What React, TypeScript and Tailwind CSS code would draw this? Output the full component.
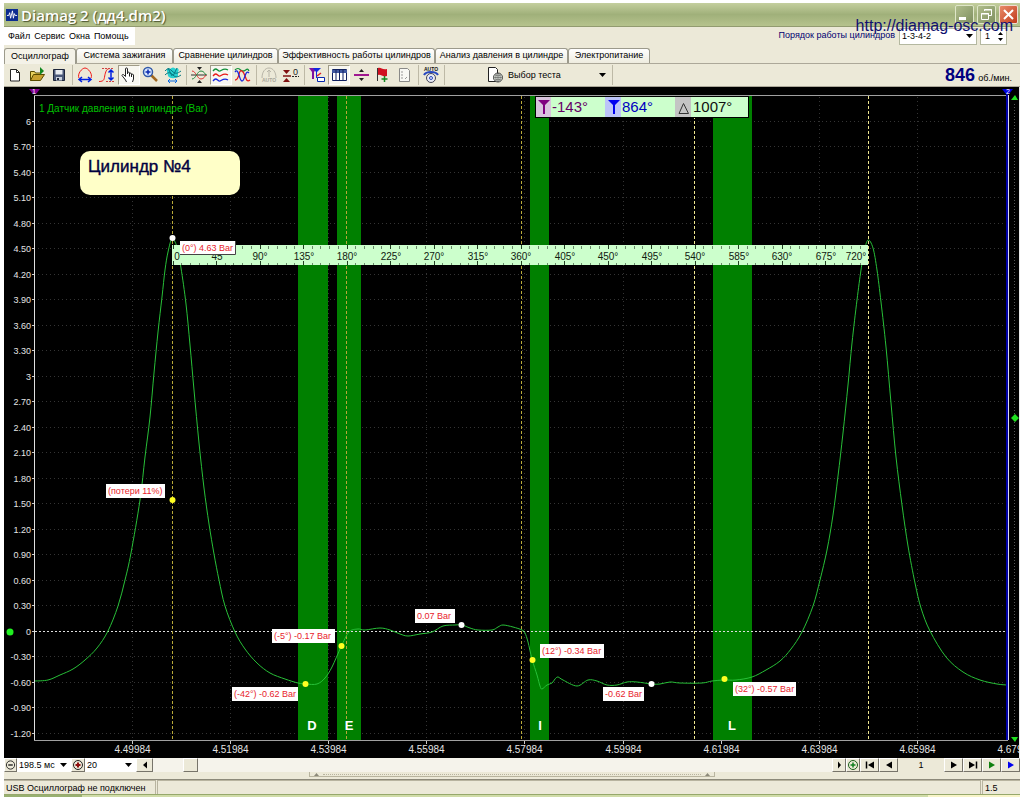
import { useState } from "react";
import type { ReactNode } from "react";

const TABS = [
  { label: "Осциллограф", w: "w-[72px]" },
  { label: "Система зажигания", w: "w-[97px]" },
  { label: "Сравнение цилиндров", w: "w-[105px]" },
  { label: "Эффективность работы цилиндров", w: "w-[157px]" },
  { label: "Анализ давления в цилиндре", w: "w-[133px]" },
  { label: "Электропитание", w: "w-[82px]" },
];

// pressure trace, chart units
const TRACE: [number, number][] = [
  [35, 681], [48, 680], [60, 675], [73, 669], [85, 660], [97, 648], [108, 631], [118, 606], [125, 580],
  [131, 553], [140, 500], [145, 457], [150, 417], [154, 373], [158, 332], [162, 297], [165, 270], [168, 252],
  [172, 239], [177, 247], [181, 268], [186, 304], [190, 345], [194, 390], [199, 443], [204, 488], [209, 524],
  [214, 554], [219, 580], [225, 606], [235, 632], [245, 649], [257, 663], [270, 673], [285, 679], [298, 683],
  [306, 684], [317, 684], [325, 678], [332, 667], [341, 647], [349, 632], [358, 629], [365, 630], [380, 628],
  [390, 630], [400, 634], [408, 636], [420, 634], [432, 632], [443, 626], [455, 625], [462, 625], [470, 628],
  [478, 630], [492, 630], [498, 627], [503, 625], [513, 627], [522, 630], [525, 633], [528, 642], [532, 659],
  [537, 675], [540, 686], [542, 689], [547, 685], [552, 683], [555, 679], [558, 677], [563, 680], [577, 686],
  [588, 680], [597, 681], [607, 685], [617, 685], [627, 682], [637, 682], [652, 684], [660, 684], [670, 682],
  [680, 683], [702, 683], [712, 681], [724, 680], [736, 680], [752, 677], [766, 670], [780, 661], [791, 649],
  [802, 632], [813, 606], [820, 580], [827, 550], [833, 515], [838, 476], [843, 433], [848, 385], [852, 343],
  [857, 300], [861, 270], [864, 252], [868, 240], [873, 248], [877, 270], [881, 302], [886, 347], [891, 403],
  [896, 457], [902, 505], [908, 546], [915, 583], [921, 608], [930, 631], [946, 657], [963, 672], [980, 680],
  [997, 684], [1007, 685],
];

const LABELS = [
  { x: 180, y: 241, w: 56, text: "(0°) 4.63 Bar" },
  { x: 106, y: 484, w: 59, text: "(потери 11%)" },
  { x: 272, y: 629, w: 63, text: "(-5°) -0.17 Bar" },
  { x: 232, y: 687, w: 66, text: "(-42°) -0.62 Bar" },
  { x: 415, y: 609, w: 40, text: "0.07 Bar" },
  { x: 540, y: 644, w: 64, text: "(12°) -0.34 Bar" },
  { x: 603, y: 687, w: 41, text: "-0.62 Bar" },
  { x: 733, y: 682, w: 63, text: "(32°) -0.57 Bar" },
];

const BANDS = [
  { x: 298, w: 30, t: "D", tx: 312 },
  { x: 337, w: 24, t: "E", tx: 349 },
  { x: 530, w: 19, t: "I", tx: 540 },
  { x: 713, w: 39, t: "L", tx: 732 },
];

const DOTS = [
  [172, 238, "#fff"], [461, 625, "#fff"], [651, 684, "#fff"],
  [172, 500, "#ff2"], [305, 684, "#ff2"], [341, 646, "#ff2"], [532, 660, "#ff2"], [724, 679, "#ff2"],
] as const;

const yLabel = (i: number) => {
  const v = 6 - i * 0.3;
  if (Math.abs(v) < 0.01) return "0";
  return i === 0 || i === 10 ? String(Math.round(v)) : v.toFixed(2);
};

// Catmull-Rom through the samples
function smooth(p: [number, number][]) {
  let d = `M${p[0][0]} ${p[0][1]}`;
  for (let i = 0; i < p.length - 1; i++) {
    const a = p[i - 1] ?? p[i], b = p[i], c = p[i + 1], e = p[i + 2] ?? c;
    d += `C${b[0] + (c[0] - a[0]) / 6} ${b[1] + (c[1] - a[1]) / 6} ${c[0] - (e[0] - b[0]) / 6} ${c[1] - (e[1] - b[1]) / 6} ${c[0]} ${c[1]}`;
  }
  return d;
}

function Chart() {
  return (
    <svg viewBox="4 87 1016 671" className="block w-full bg-black" fontFamily="Liberation Sans, Arial, sans-serif" role="img" aria-label="Датчик давления в цилиндре">
      {/* grid */}
      {Array.from({ length: 25 }, (_, i) => {
        const y = Math.round(122 + i * 25.48) - 0.5;
        return (
          <g key={i}>
            {i !== 20 && <path d={`M38 ${y}H1006`} stroke="#343434" strokeDasharray="1 3" />}
            <path d={`M32 ${y}h3`} stroke="#ccc" />
            <text x="31" y={y + 3.5} fontSize="9" fill="#e4e4e4" textAnchor="end">{yLabel(i)}</text>
          </g>
        );
      })}
      {Array.from({ length: 10 }, (_, i) => {
        const x = Math.round(132 + i * 98.1) + 0.5;
        return (
          <g key={i}>
            {i < 9 && <path d={`M${x} 97V740`} stroke="#343434" strokeDasharray="1 3" />}
            {i < 9 && <path d={`M${x} 741v3`} stroke="#ccc" />}
            <text x={x} y="753" fontSize="10" fill="#e4e4e4" textAnchor="middle">{(4.49984 + i * 0.02).toFixed(5)}</text>
          </g>
        );
      })}

      {BANDS.map((b) => <rect key={b.t} x={b.x} y="95" width={b.w} height="646" fill="#008000" />)}
      <path d="M35 631.5H1007" stroke="#ddd" strokeDasharray="2 2" />
      {[172.5, 346.5, 521.5, 694.5, 868.5].map((x) => (
        <path key={x} d={`M${x} 96V740`} stroke={x < 600 ? "#b8a838" : "#f0e890"} strokeDasharray="3 2" />
      ))}
      <path d={smooth(TRACE)} fill="none" stroke="#28c038" strokeWidth="1" />

      {/* axes and cursors */}
      <path d="M34.5 95V741" stroke="#e0e0e0" strokeWidth="1" />
      <path d="M34 95.5H1008M34 740.5H1008" stroke="#a0a0a0" />
      <path d="M1007 92V740" stroke="#0000a8" strokeWidth="2" />
      <path d="M1008.5 95V740" stroke="#d8d8f0" />
      <path d="M1014.5 104V734" stroke="#555" strokeDasharray="1 2" />
      <path d="M29 89h11l-4 5h-3z" fill="#800090" />
      <path d="M1002 89h11l-4 5h-3z" fill="#0000e0" />
      <text x="34" y="94" fontSize="7" fill="#fff" textAnchor="middle">1</text>
      <text x="1008" y="94" fontSize="7" fill="#fff" textAnchor="middle">2</text>
      <path d="M1011 100h7l-3-5zM1011 737h7l-3 5zM1011 418l4-4 4 4-4 4z" fill="#20e020" />
      <circle cx="10" cy="632" r="3.5" fill="#20f020" />
      <path d="M1019.5 87V758" stroke="#e8e8e8" />

      <text x="39" y="112" fontSize="10" fill="#00c000">1 Датчик давления в цилиндре (Bar)</text>
      {BANDS.map((b) => (
        <text key={b.t} x={b.tx} y="730" fontSize="13" fontWeight="bold" fill="#fff" textAnchor="middle">{b.t}</text>
      ))}

      {/* callout */}
      <rect x="80" y="151" width="160" height="44" rx="10" fill="#ffffc8" />
      <text x="88" y="172" fontSize="17" fill="#000040" stroke="#000040" strokeWidth="0.4">Цилиндр №4</text>

      {/* crank angle ruler */}
      <rect x="172" y="245" width="696" height="20" fill="#ccffcc" />
      {Array.from({ length: 80 }, (_, i) => {
        const x = Math.round(172.5 + i * 8.7) + 0.5;
        const major = i % 5 === 0;
        return <path key={i} d={major ? `M${x} 245v4M${x} 265v-4` : `M${x} 246v3M${x} 265v-2`} stroke={major ? "#234023" : "#6a8a6a"} />;
      })}
      {Array.from({ length: 17 }, (_, i) => (
        <text key={i} x={i === 0 ? 177 : i === 16 ? 856 : Math.round(173 + i * 43.5)} y="260" fontSize="10" fill="#102010" textAnchor="middle">
          {i < 2 ? i * 45 : `${i * 45}°`}
        </text>
      ))}

      {LABELS.map((l) => (
        <g key={l.text}>
          <rect x={l.x} y={l.y} width={l.w} height="14" fill="#fff" />
          <text x={l.x + 2} y={l.y + 10} fontSize="9" fill="#e81c2c">{l.text}</text>
        </g>
      ))}
      <path d="M180 254.5h55.5V241" fill="none" stroke="#444" />
      {DOTS.map(([x, y, c]) => <circle key={`${x}-${y}`} cx={x + 0.5} cy={y} r="3" fill={c} />)}

      {/* cursor readout */}
      <rect x="535.5" y="96.5" width="213" height="21" fill="#ccffcc" stroke="#000" />
      <path d="M536 97h15v20h-15z" fill="#d9c4dd" />
      <path d="M605 97h16v20h-16z" fill="#bcc4f8" />
      <path d="M675 97h16v20h-16z" fill="#c4c4c4" />
      <path d="M538 100h12l-5 5v9h-2v-9z" fill="#800080" />
      <path d="M608 100h12l-5 5v9h-2v-9z" fill="#0000f0" />
      <path d="M679 113.500h9.500l-5-10z" fill="none" stroke="#333" />
      <g fontSize="15">
        <text x="552" y="112" fill="#660066">-143°</text>
        <text x="622" y="112" fill="#0000c0">864°</text>
        <text x="693" y="112" fill="#101010">1007°</text>
      </g>
    </svg>
  );
}

const Ic = ({ children }: { children: ReactNode }) => (
  <svg width="18" height="18" viewBox="0 0 18 18" fill="none" aria-hidden="true">{children}</svg>
);

function Tool({ label, on, children }: { label: string; on?: boolean; children: ReactNode }) {
  return (
    <button
      aria-label={label}
      className={on
        ? "flex h-5 w-[22px] flex-none items-center justify-center border border-r-white border-b-white border-l-[#a09c88] border-t-[#a09c88] bg-[#f8f7f1]"
        : "flex h-5 w-[22px] flex-none items-center justify-center"}
    >
      <Ic>{children}</Ic>
    </button>
  );
}

const Sep = () => <span className="flex h-5 w-1 flex-none justify-center"><span className="w-px bg-[#bdb9a6]" /></span>;

const Arrow = () => (
  <svg width="7" height="4" viewBox="0 0 7 4" className="pointer-events-none absolute right-1 top-1/2 -mt-0.5" aria-hidden="true">
    <path d="M0 0h7L3.500 4z" fill="#000" />
  </svg>
);

function Btn({ label, w, children }: { label: string; w: string; children: ReactNode }) {
  return (
    <button aria-label={label} className={`${w} flex h-full flex-none items-center justify-center border border-t-white border-l-white border-r-[#77746a] border-b-[#77746a] bg-[#ece9d8]`}>
      <svg width="12" height="12" viewBox="0 0 12 12" fill="none" aria-hidden="true">{children}</svg>
    </button>
  );
}

function Toolbar() {
  return (
    <div className="flex h-[23px] items-center border-b border-[#aca899]">
      <Tool label="Новый"><path d="M4.500 3.500h6l3 3v8.500h-9z" fill="#fff" stroke="#222" /><path d="M10.500 3.500v3h3" stroke="#222" /></Tool>
      <Tool label="Открыть">
        <path d="M2.500 14.500v-9h4l1 1.500h5v2" fill="#e8d060" stroke="#594a00" />
        <path d="M2.500 14.500l3-6h11l-4 6z" fill="#c8a030" stroke="#594a00" />
        <path d="M12 1v8l4-4z" fill="#108820" />
      </Tool>
      <Tool label="Сохранить">
        <path d="M3.500 3.500h11v11h-11z" fill="#4a5878" stroke="#1c2438" />
        <path d="M5.500 4h7v4.500h-7z" fill="#e8ecf0" /><path d="M6 11h6v3.500h-6z" fill="#c8d0dc" /><path d="M7 12h2v2H7z" fill="#1c2438" />
      </Tool>
      <Sep />
      <Tool label="Период">
        <path d="M3 12C1 8 6 2 9 2s8 6 6 10" stroke="#f01818" /><path d="M3 13.500h12M6 11l-3 2.500 3 2.500M12 11l3 2.500-3 2.500" stroke="#0020e0" strokeWidth="1.500" />
      </Tool>
      <Tool label="Амплитуда">
        <path d="M1 15.500c6 0 5-3 6-7s2-6 5-6" stroke="#f01818" /><path d="M4 2.500h12M8 15.500h8" stroke="#d04040" strokeDasharray="2 1" />
        <path d="M13 4v10M10.500 6.500L13 4l2.500 2.500M10.500 11.500L13 14l2.500-2.500" stroke="#0020e0" strokeWidth="1.500" />
      </Tool>
      <Tool label="Рука" on>
        <path d="M6.500 16l-1-2-3.500-4.500c0-1 1-1.500 2-.5l1.500 1.500V3c0-1.500 2-1.500 2 0v5-1c0-1.200 2-1.200 2 0v1c0-1.200 2-1.200 2 0v1c0-1.200 2-1 2 0v4l-1 3" fill="#fff" stroke="#222" />
        <path d="M9.500 8v2.500M11.500 9v2" stroke="#222" />
      </Tool>
      <Tool label="Увеличить">
        <path d="M9 9l6 6" stroke="#a06820" strokeWidth="2.500" /><circle cx="6" cy="6" r="4.500" fill="#d8e8ff" stroke="#3058a8" strokeWidth="1.500" />
        <path d="M6 3.500v5M3.500 6h5" stroke="#0828b0" strokeWidth="1.500" />
      </Tool>
      <Tool label="Растянуть сигнал">
        <path d="M3 5C2 3 5 1 6 3c2-2 4-2 6 0 1-2 4 0 2 3v4c-2 3-8 3-10 0z" fill="#28d0d0" />
        <path d="M1 5c3-3 4-3 7 0s5 3 9 0M1 9c3-3 5-3 8 0s5 2 8 0M4 2l4 8M13 2l-4 8" stroke="#087880" />
        <path d="M4 15h9M6 13l-2 2 2 2M11 13l2 2-2 2" stroke="#0868e0" />
      </Tool>
      <Sep />
      <Tool label="Совместить">
        <path d="M1 9h16" stroke="#333" /><path d="M2 5c4 0 5 8 9 8 3 0 4-3 5-4" stroke="#e03030" /><path d="M2 13c4 0 5-8 9-8 3 0 4 3 5 4" stroke="#208840" />
        <path d="M7 1h5L9.500 4zM7 17h5L9.500 14z" fill="#222" />
      </Tool>
      <Tool label="Разнести" on>
        <path d="M1 5c3-4 4-1 6 0s4-4 9-1" stroke="#109038" strokeWidth="1.300" /><path d="M1 10c3-4 4-1 6 0s4-4 9-1" stroke="#e81818" strokeWidth="1.300" />
        <path d="M1 15c3-4 4-1 6 0s4-4 9-1" stroke="#1828e0" strokeWidth="1.300" />
      </Tool>
      <Tool label="Наложить">
        <path d="M1 4c4-4 5 1 8 1s4-4 6 0" stroke="#109038" strokeWidth="1.300" /><path d="M1 14c5 0 3-11 7-9s3 13 8 9" stroke="#e81818" strokeWidth="1.300" />
        <path d="M1 6c4-5 4 9 7 9s3-12 7-8" stroke="#1828e0" strokeWidth="1.300" />
      </Tool>
      <Sep />
      <Tool label="Авто">
        <path d="M2 12c0-6 3-10 7-10s7 4 7 10M9 4v7M7 6l2-2 2 2" stroke="#b8b5a8" />
        <text x="9" y="16" fontSize="5" textAnchor="middle" fill="#a8a598" fontFamily="Liberation Sans, sans-serif" fontWeight="bold">AUTO</text>
      </Tool>
      <Tool label="Ноль">
        <path d="M1 4h7L4.500 8zM1 16h7l-3.500-4z" fill="#801010" /><path d="M1 10h8" stroke="#801010" strokeWidth="1.500" /><path d="M10 10.500h7" stroke="#222" strokeDasharray="2 1" />
        <text x="11" y="9" fontSize="9" fill="#222" fontFamily="Liberation Sans, sans-serif">0</text>
      </Tool>
      <Sep />
      <Tool label="Курсоры">
        <path d="M1 2h8L6 6v7H4V6z" fill="#8010a0" /><path d="M5 2h8l-4 4v6H8V6z" fill="#1028e0" /><path d="M9.500 11.500h7v4h-7z" fill="#fff" stroke="#0828b0" /><path d="M13 7l-4 3" stroke="#e02020" strokeWidth="1.500" />
      </Tool>
      <Tool label="Таблица" on>
        <path d="M2.500 3.500h14v11h-14z" fill="#fff" stroke="#102060" /><path d="M2 4h15v3H2z" fill="#4058a0" />
        <path d="M6 4v11M9.500 4v11M13 4v11" stroke="#102060" />
      </Tool>
      <Tool label="Разделить"><path d="M2 9h15" stroke="#a01890" strokeWidth="2" /><path d="M7 6h5L9.500 3zM7 12h5L9.500 15z" fill="#222" /></Tool>
      <Tool label="Добавить метку">
        <path d="M3.500 2v13" stroke="#333" /><path d="M4 2c3-1 4 2 9 1v7c-5 1-6-2-9-1z" fill="#d01020" /><path d="M10.500 10v6M7.500 13h6" stroke="#108820" strokeWidth="1.500" />
      </Tool>
      <Tool label="Отчёт">
        <path d="M3.500 2.500h8l2 2v11h-10z" fill="#f8f8f4" stroke="#8a8a88" /><path d="M5 6h2M5 9h2M5 12h2M9 13l2-2" stroke="#999" />
      </Tool>
      <Sep />
      <Tool label="Автонастройка">
        <text x="9" y="5" fontSize="5" textAnchor="middle" fill="#111" fontFamily="Liberation Sans, sans-serif" fontWeight="bold">AUTO</text>
        <path d="M2 9c2-4 12-4 14 0" stroke="#2848c0" strokeWidth="2" /><circle cx="9" cy="12" r="4.500" fill="#e8eaf4" stroke="#445" />
        <circle cx="9" cy="12" r="1.500" stroke="#2848c0" />
      </Tool>
      <Sep />
      <div className="relative ml-10 flex h-5 items-center">
        <Ic>
          <path d="M2.500 1.500h7l2 2v12h-9z" fill="#fff" stroke="#222" />
          <circle cx="12" cy="11.500" r="4.500" fill="#dde4dc" stroke="#444" /><path d="M7.500 11.500h9M12 7v9M9 9c2 1 4 1 6 0M9 14c2-1 4-1 6 0M12 7c-3 3-3 6 0 9M12 7c3 3 3 6 0 9" stroke="#555" strokeWidth="0.600" />
        </Ic>
        <select aria-label="Выбор теста" className="h-4 w-[106px] appearance-none bg-transparent pl-1 text-[9px] leading-4">
          <option>Выбор теста</option>
        </select>
        <Arrow />
      </div>
      <Sep />
      <div className="ml-auto flex items-baseline gap-[3px] pr-2">
        <span className="text-[18px] font-bold leading-5 text-[#000080]">846</span>
        <span className="text-[9px]">об./мин.</span>
      </div>
    </div>
  );
}

export default function App() {
  const [tab, setTab] = useState(0);
  const [scroll, setScroll] = useState(45);

  return (
    <div className="min-h-screen bg-white px-1 pt-[3px] font-['Liberation_Sans',Arial,sans-serif] text-[9px] text-black">
      <div className="relative bg-[#ece9d8]">
        {/* title bar */}
        <header className="flex h-6 items-center border-b border-[#929b70] bg-linear-to-b from-[#c4cf9e] via-[#a0b07a] to-[#b6c38d] px-[2px]">
          <svg width="12" height="12" viewBox="0 0 13 13" aria-hidden="true">
            <path d="M0 0h13v13H0z" fill="#0c2c90" />
            <path d="M1 7h2l1-3 1 6 2-8 1 8 1-5 1 2h2" fill="none" stroke="#fff" />
          </svg>
          <h1 className="ml-[3px] font-['Open_Sans',sans-serif] text-[15px] font-semibold leading-5 text-white [text-shadow:1px_1px_1px_#4c5630]">Diamag 2 (дд4.dm2)</h1>
          <div className="ml-auto flex gap-[3px]">
            <button aria-label="Свернуть" className="flex size-[19px] items-end rounded-[2px] border border-[#dfe6c8] bg-linear-to-br from-[#b0bd8c] to-[#7f9060] p-[3px]">
              <span className="h-[3px] w-[7px] bg-white" />
            </button>
            <button aria-label="Восстановить" className="flex size-[19px] items-center justify-center rounded-[2px] border border-[#dfe6c8] bg-linear-to-br from-[#b0bd8c] to-[#7f9060]">
              <svg width="13" height="13" viewBox="0 0 13 13" fill="none" stroke="#fff" aria-hidden="true">
                <path d="M4.500 3V1.500h7v6H9M4 2h8M1.500 5.500h7v6h-7zM1 6h8" />
              </svg>
            </button>
            <button aria-label="Закрыть" className="flex size-[19px] items-center justify-center rounded-[2px] border border-[#f0dcd0] bg-linear-to-br from-[#e88a68] to-[#c03818]">
              <svg width="11" height="11" viewBox="0 0 11 11" stroke="#fff" strokeWidth="2" aria-hidden="true"><path d="M1 1l9 9M10 1l-9 9" /></svg>
            </button>
          </div>
        </header>
        <a href="http://diamag-osc.com" className="absolute right-[7px] top-[13px] z-10 text-[16px] leading-5 text-[#101070]">http://diamag-osc.com</a>

        {/* menu */}
        <div className="flex h-[21px] items-start">
          <nav className="flex h-[18px] w-[131px] items-center gap-1 bg-white pl-1 pt-[2px]">
            <button>Файл</button>
            <button>Сервис</button>
            <button>Окна</button>
            <button>Помощь</button>
          </nav>
          <div className="ml-auto flex h-[18px] items-center pr-[13px]">
            <label htmlFor="order" className="text-[9px] text-[#000070]">Порядок работы цилиндров</label>
            <div className="relative ml-1">
              <select id="order" className="block h-[17px] w-[78px] appearance-none border border-[#b4b8a0] bg-white pl-[2px] text-[9px] leading-3">
                <option>1-3-4-2</option>
              </select>
              <Arrow />
            </div>
            <div className="relative ml-[3px]">
              <input aria-label="Номер цилиндра" defaultValue="1" className="block h-[17px] w-[27px] border border-[#b4b8a0] bg-white pl-1 text-[9px]" />
              <svg width="5" height="9" viewBox="0 0 5 9" className="absolute right-1 top-1" aria-hidden="true"><path d="M0 3h5L2.500 0zM0 6h5L2.500 9z" /></svg>
            </div>
          </div>
        </div>

        {/* tabs */}
        <div role="tablist" className="flex h-4 border-b border-[#aca899]">
          {TABS.map((t, i) => (
            <button
              key={t.label}
              role="tab"
              aria-selected={tab === i}
              onClick={() => setTab(i)}
              className={`${t.w} flex-none whitespace-nowrap rounded-t-[3px] border border-b-0 border-[#9c9a8c] ${tab === i ? "-mb-px bg-[#f4f2e8]" : "bg-linear-to-b from-white to-[#eeecdf]"}`}
            >
              {t.label}
            </button>
          ))}
        </div>

        <Toolbar />
        <Chart />

        {/* scale and scroll */}
        <div className="flex h-[14px] items-center text-[9px]">
          <Btn label="Уменьшить развёртку" w="w-[13px]"><circle cx="6" cy="6" r="4.500" stroke="#222" /><path d="M3.500 6h5" stroke="#222" strokeWidth="1.500" /></Btn>
          <div className="relative">
            <select aria-label="Развёртка" className="block h-[14px] w-[54px] appearance-none bg-white pl-[2px] leading-3"><option>198.5 мс</option></select>
            <Arrow />
          </div>
          <Btn label="Увеличить развёртку" w="w-[14px]"><circle cx="6" cy="6" r="4.500" stroke="#222" /><path d="M3.500 6h5M6 3.500v5" stroke="#901010" strokeWidth="2" /></Btn>
          <div className="relative">
            <select aria-label="Шаг" className="block h-[14px] w-[51px] appearance-none bg-white pl-[2px] leading-3"><option>20</option></select>
            <Arrow />
          </div>
          <Btn label="Влево" w="w-[17px]"><path d="M8 2.500v7L4 6z" fill="#000" /></Btn>
          <input
            type="range"
            aria-label="Прокрутка"
            min={0}
            max={1000}
            value={scroll}
            onChange={(e) => setScroll(Number(e.target.value))}
            className="h-[14px] min-w-0 flex-1 appearance-none bg-[#f5f3eb] [&::-webkit-slider-thumb]:h-[14px] [&::-webkit-slider-thumb]:w-[15px] [&::-webkit-slider-thumb]:appearance-none [&::-webkit-slider-thumb]:rounded-none [&::-webkit-slider-thumb]:border [&::-webkit-slider-thumb]:border-t-white [&::-webkit-slider-thumb]:border-l-white [&::-webkit-slider-thumb]:border-r-[#77746a] [&::-webkit-slider-thumb]:border-b-[#77746a] [&::-webkit-slider-thumb]:bg-[#ece9d8]"
          />
          <Btn label="Вправо" w="w-[14px]"><path d="M5 2.500v7L8 6z" fill="#000" /></Btn>
          <Btn label="Добавить кадр" w="w-[14px]"><circle cx="6" cy="6" r="4.500" stroke="#186018" /><path d="M3.500 6h5M6 3.500v5" stroke="#108020" strokeWidth="1.500" /></Btn>
          <Btn label="Первый кадр" w="w-[19px]"><path d="M2.500 2.500v7" stroke="#000" strokeWidth="1.500" /><path d="M10 2.500v7L4 6z" fill="#000" /></Btn>
          <Btn label="Предыдущий кадр" w="w-[19px]"><path d="M9 2.500v7L3 6z" fill="#000" /></Btn>
          <span className="w-[46px] text-center leading-3">1</span>
          <Btn label="Следующий кадр" w="w-[19px]"><path d="M3 2.500v7L9 6z" fill="#000" /></Btn>
          <Btn label="Последний кадр" w="w-[19px]"><path d="M9.500 2.500v7" stroke="#000" strokeWidth="1.500" /><path d="M2 2.500v7L8 6z" fill="#000" /></Btn>
          <Btn label="Пуск" w="w-[19px]"><path d="M3 2.500v7L9 6z" fill="#108010" /></Btn>
          <Btn label="Пуск с записью" w="w-[19px]"><path d="M3 2.500v7L9 6z" fill="#0000f0" /></Btn>
        </div>

        {/* splitter */}
        <div className="flex h-2 justify-center border-b border-[#8c897a]">
          <div className="flex h-[5px] w-2/5 items-center justify-between border border-t-0 border-[#b8b49f] px-1">
            <svg width="5" height="3" viewBox="0 0 5 3" aria-hidden="true"><path d="M0 3h5L2.500 0z" fill="#8c897a" /></svg>
            <span className="mx-1 flex-1 border-t border-dotted border-[#b8b49f]" />
            <svg width="5" height="3" viewBox="0 0 5 3" aria-hidden="true"><path d="M0 3h5L2.500 0z" fill="#8c897a" /></svg>
          </div>
        </div>

        {/* status */}
        <footer className="flex h-[14px] items-center leading-3">
          <span className="h-full w-[152px] border-r border-t border-[#b8b49f] pl-[2px] pt-px">USB Осциллограф не подключен</span>
          <span className="ml-px h-full flex-1 border border-b-0 border-[#b8b49f]" />
          <span className="ml-px h-full w-[38px] border-l border-t border-[#b8b49f] pl-[2px] pt-px">1.5</span>
        </footer>
        <div className="flex h-[3px] border-t border-[#96a86c]">
          <span className="w-[78px] bg-[#98b070]" />
          <span className="flex-1 bg-[#d0dca8]" />
          <span className="w-[92px] bg-[#f8f4c8]" />
        </div>
      </div>
    </div>
  );
}
